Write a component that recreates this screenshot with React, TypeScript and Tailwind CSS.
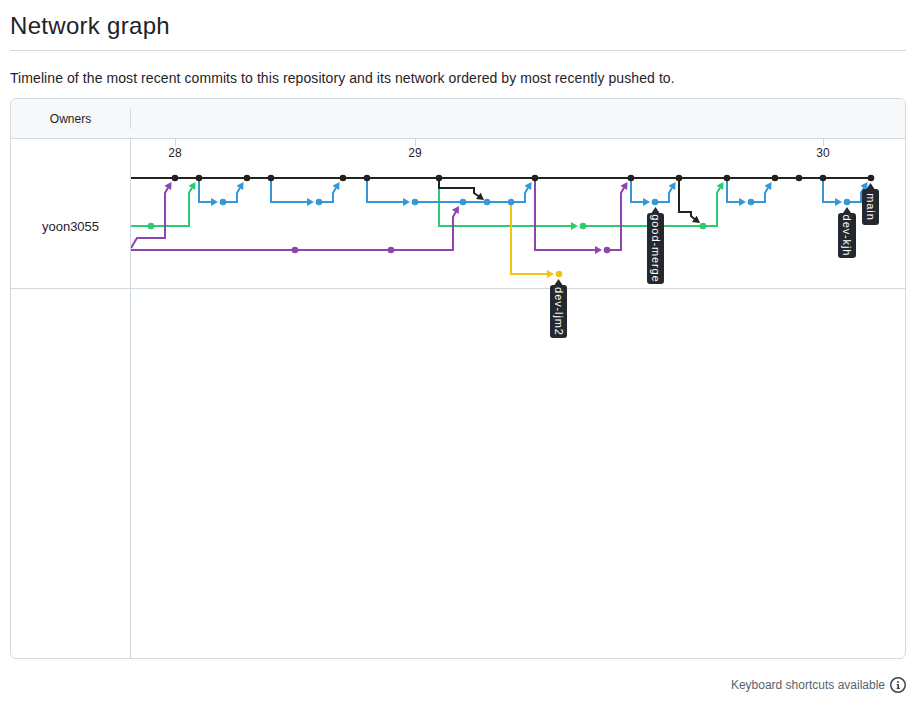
import React from "react";

const BLK = "#222222";
const BLUE = "#3498db";
const GREEN = "#2ecc71";
const PURPLE = "#8e44ad";
const YELLOW = "#f1c40f";

const R = [178, 202, 226, 250, 274];

function arrowPts(tx: number, ty: number, dx: number, dy: number, len = 7, hw = 4) {
  const m = Math.hypot(dx, dy);
  const ux = dx / m;
  const uy = dy / m;
  const bx = tx - ux * len;
  const by = ty - uy * len;
  const nx = -uy;
  const ny = ux;
  return `${tx},${ty} ${bx + nx * hw},${by + ny * hw} ${bx - nx * hw},${by - ny * hw}`;
}

type Seg = { d: string; color: string; arrow?: [number, number, number, number] };

function branch(px: number, py: number, cx: number, cy: number, color: string): Seg {
  return {
    d: `M${px},${py} V${cy} H${cx - 10}`,
    color,
    arrow: [cx - 5, cy, 1, 0],
  };
}
function mergeUp(sx: number, sy: number, cx: number, cy: number, color: string): Seg {
  return {
    d: `M${sx},${sy} H${cx - 10} V${cy + 15} L${cx - 6},${cy + 8}`,
    color,
    arrow: [cx - 3.5, cy + 4, 5, -8],
  };
}

const segs: Seg[] = [
  { d: `M131,226 H189 V193 L193,186`, color: GREEN, arrow: [195.5, 182, 5, -8] },
  branch(439, 178, 583, 226, GREEN),
  { d: `M583,226 H703`, color: GREEN },
  mergeUp(703, 226, 727, 178, GREEN),
  { d: `M131,248 L137,238 H165 V193 L169,186`, color: PURPLE, arrow: [171.5, 182, 5, -8] },
  { d: `M131,250 H453 V217 L456.5,210.5`, color: PURPLE, arrow: [459, 206, 5, -8] },
  branch(535, 178, 607, 250, PURPLE),
  mergeUp(607, 250, 631, 178, PURPLE),
  branch(199, 178, 223, 202, BLUE),
  mergeUp(223, 202, 247, 178, BLUE),
  branch(271, 178, 319, 202, BLUE),
  mergeUp(319, 202, 343, 178, BLUE),
  branch(367, 178, 415, 202, BLUE),
  { d: `M415,202 H511`, color: BLUE },
  mergeUp(511, 202, 535, 178, BLUE),
  branch(631, 178, 655, 202, BLUE),
  mergeUp(655, 202, 679, 178, BLUE),
  branch(727, 178, 751, 202, BLUE),
  mergeUp(751, 202, 775, 178, BLUE),
  branch(823, 178, 847, 202, BLUE),
  mergeUp(847, 202, 871, 178, BLUE),
  branch(511, 202, 559, 274, YELLOW),
  { d: `M131,178 H871`, color: BLK },
  { d: `M439,178 V188 H474 V193 L479,196.5`, color: BLK, arrow: [484, 200, 3, 2.2] },
  { d: `M679,178 V212 H691 V216 L695,219.5`, color: BLK, arrow: [700, 223, 3, 2.2] },
];

const dots: [number, number, string][] = [
  ...[175, 199, 247, 271, 343, 367, 439, 535, 631, 679, 727, 775, 799, 823, 871].map(
    (x) => [x, R[0], BLK] as [number, number, string]
  ),
  ...[223, 319, 415, 463, 487, 511, 655, 751, 847].map((x) => [x, R[1], BLUE] as [number, number, string]),
  ...[151, 583, 703].map((x) => [x, R[2], GREEN] as [number, number, string]),
  ...[295, 391, 607].map((x) => [x, R[3], PURPLE] as [number, number, string]),
  [559, R[4], YELLOW],
];

type Tag = { cx: number; tip: number; left: number; right: number; bottom: number; text: string };
const tags: Tag[] = [
  { cx: 655.5, tip: 207, left: 647, right: 664, bottom: 284, text: "good-merge" },
  { cx: 558.5, tip: 279, left: 550, right: 567, bottom: 338, text: "dev-ljm2" },
  { cx: 847, tip: 207, left: 838, right: 856, bottom: 258, text: "dev-kjh" },
  { cx: 870.5, tip: 183, left: 862, right: 879, bottom: 225, text: "main" },
];

function tagPath(t: Tag) {
  const s = t.tip + 6;
  return `M${t.cx},${t.tip} L${t.cx + 4},${s} H${t.right - 3} Q${t.right},${s} ${t.right},${s + 3} V${t.bottom - 3} Q${t.right},${t.bottom} ${t.right - 3},${t.bottom} H${t.left + 3} Q${t.left},${t.bottom} ${t.left},${t.bottom - 3} V${s + 3} Q${t.left},${s} ${t.left + 3},${s} H${t.cx - 4} Z`;
}

function Graph() {
  return (
    <svg width={775} height={519} className="block" style={{ fontFamily: "'Liberation Sans', Arial, sans-serif" }}>
      <g transform="translate(-131 -139)">
        <line x1={131} y1={288.5} x2={906} y2={288.5} stroke="#d1d9e0" strokeWidth={1} />
        {[175, 415, 823].map((x) => (
          <line key={x} x1={x + 0.5} y1={139} x2={x + 0.5} y2={146} stroke="#d1d9e0" strokeWidth={1} />
        ))}
        <text x={175} y={157} fontSize={12} textAnchor="middle" fill="#1f2328">28</text>
        <text x={415} y={157} fontSize={12} textAnchor="middle" fill="#1f2328">29</text>
        <text x={823} y={157} fontSize={12} textAnchor="middle" fill="#1f2328">30</text>
        {segs.map((s, i) => (
          <g key={i}>
            <path d={s.d} fill="none" stroke={s.color} strokeWidth={2} strokeLinejoin="miter" />
            {s.arrow && <polygon points={arrowPts(...s.arrow)} fill={s.color} />}
          </g>
        ))}
        {dots.map(([x, y, c], i) => (
          <circle key={i} cx={x} cy={y} r={3.3} fill={c} />
        ))}
        {tags.map((t) => (
          <g key={t.text}>
            <path d={tagPath(t)} fill="#24292f" />
            <text
              x={(t.left + t.right) / 2}
              y={(t.tip + 6 + t.bottom) / 2}
              fontSize={11}
              fill="#ffffff"
              textAnchor="middle"
              dominantBaseline="central"
              letterSpacing={0.9}
              transform={`rotate(90 ${(t.left + t.right) / 2} ${(t.tip + 6 + t.bottom) / 2})`}
            >
              {t.text}
            </text>
          </g>
        ))}
      </g>
    </svg>
  );
}

export default function App() {
  return (
    <div className="w-[923px] h-[721px] bg-white text-[#1f2328] font-['Liberation_Sans',Arial,sans-serif]">
      <div className="ml-[10px] w-[896px] pt-[11px]">
        <h1 className="text-[24px] leading-[30px] font-normal tracking-[0.3px] pb-[9px] border-b border-[#d1d9e0]">Network graph</h1>
        <p className="mt-[17px] text-[14px] leading-[20px] tracking-[0.08px]">
          Timeline of the most recent commits to this repository and its network ordered by most recently pushed to.
        </p>
        <div className="mt-[10px] h-[561px] border border-[#d1d9e0] rounded-[6px] overflow-hidden flex flex-col">
          <div className="h-[40px] shrink-0 bg-[#f6f8fa] border-b border-[#d1d9e0] flex items-center">
            <div className="w-[119px] text-center text-[12px]">Owners</div>
            <div className="w-px h-[20px] bg-[#d1d9e0]" />
          </div>
          <div className="flex flex-1">
            <div className="w-[120px] shrink-0 border-r border-[#d1d9e0]">
              <div className="h-[150px] border-b border-[#d1d9e0] pt-[78px] text-center text-[13px] leading-[20px]">
                yoon3055
              </div>
            </div>
            <div className="flex-1">
              <Graph />
            </div>
          </div>
        </div>
        <div className="mt-[17px] flex items-center justify-end gap-[5px] text-[12px] leading-[18px] text-[#59636e]">
          <span>Keyboard shortcuts available</span>
          <svg width={16} height={16} viewBox="0 0 16 16" fill="#3d444d">
            <path d="M0 8a8 8 0 1 1 16 0A8 8 0 0 1 0 8Zm8-6.5a6.5 6.5 0 1 0 0 13 6.5 6.5 0 0 0 0-13ZM6.5 7.75A.75.75 0 0 1 7.25 7h1a.75.75 0 0 1 .75.75v2.75h.25a.75.75 0 0 1 0 1.5h-2a.75.75 0 0 1 0-1.5h.25v-2h-.25a.75.75 0 0 1-.75-.75ZM8 6a1 1 0 1 1 0-2 1 1 0 0 1 0 2Z" />
          </svg>
        </div>
      </div>
    </div>
  );
}
